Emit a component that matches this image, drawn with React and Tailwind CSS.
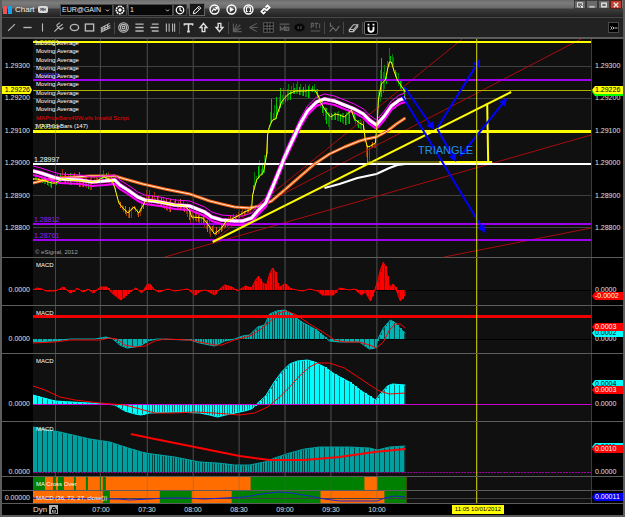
import { ChevronDownIcon } from 'lucide-react';

// Chart space: x runs 33..592 over the plot, y is shared by all the panes
const LEFT = 33;
const WIDTH = 559;
const gridX = [55, 100, 147, 193, 239, 285, 331, 377];
const crosshairX = 477;
const times = ['07:00', '07:30', '08:00', '08:30', '09:00', '09:30', '10:00'];
const prices = ['1.29300', '1.29200', '1.29100', '1.29000', '1.28900', '1.28800'];

const price = [
  [33, 179], [37, 179], [45, 181], [52, 183], [56, 183], [60, 180], [62, 178], [70, 180], [85, 181], [95, 182],
  [104, 177], [112, 180], [115, 188], [119, 203], [124, 209], [128, 213], [134, 207], [139, 213], [145, 202],
  [148, 200], [155, 201], [170, 204], [185, 206], [190, 211], [192, 217], [203, 218], [208, 224], [212, 230],
  [215, 234], [222, 228], [226, 222], [232, 219], [240, 215], [245, 212], [252, 209], [253, 195], [257, 180],
  [260, 176], [264, 172], [267, 155], [268, 135], [270, 126], [273, 120], [276, 119], [278, 113], [282, 102],
  [285, 98], [289, 94], [296, 91], [305, 91], [315, 90], [318, 94], [322, 104], [327, 112], [331, 117],
  [336, 114], [340, 115], [345, 117], [352, 110], [355, 119], [360, 123], [364, 125], [366, 140], [368, 147],
  [371, 146], [376, 143], [378, 120], [379, 100], [382, 84], [386, 80], [388, 70], [390, 62], [392, 62],
  [395, 72], [398, 80], [402, 86], [406, 92],
];

const fastMa = [
  [33, 171], [41, 173], [53, 177], [60, 179], [80, 180], [92, 182], [105, 181], [115, 180], [120, 185],
  [128, 190], [138, 197], [145, 200], [160, 202], [175, 205], [190, 206], [200, 210], [205, 212], [212, 217],
  [222, 220], [235, 221], [243, 221], [252, 218], [258, 211], [266, 203], [273, 187], [280, 170], [286, 155],
  [293, 140], [301, 123], [308, 111], [317, 102], [325, 99], [335, 101], [345, 105], [355, 109], [364, 114],
  [370, 120], [377, 125], [385, 116], [392, 106], [400, 100], [406, 98],
];

const slowMa = [
  [33, 183], [45, 180], [58, 178], [75, 177], [90, 176], [115, 176], [125, 179], [143, 184], [165, 189],
  [190, 194], [210, 201], [222, 204], [235, 207], [250, 208], [260, 206], [272, 201], [285, 190], [300, 177],
  [315, 164], [330, 154], [345, 147], [360, 141], [367, 139], [377, 137], [388, 131], [397, 124], [406, 118],
];

const longMa = [[325, 188], [340, 184], [358, 178], [377, 174], [390, 168], [398, 165], [406, 164]];

// [x, reach above the price line, reach below it]
const barReach = [
  [33, 5, 4], [60, 9, 5], [75, 8, 5], [78, 8, 14], [84, 8, 8], [90, 5, 9], [104, 9, 4], [112, 4, 5], [119, 2, 6],
  [126, 5, 5], [138, 2, 11], [145, 9, 3], [149, 14, 4], [160, 6, 8], [185, 6, 8], [190, 7, 11], [210, 6, 9],
  [215, 7, 5], [226, 5, 6], [250, 5, 3], [254, 18, 1], [257, 22, 1], [262, 14, 2], [268, 22, 1], [272, 28, 1],
  [280, 17, 5], [290, 11, 6], [315, 6, 8], [322, 4, 12], [332, 4, 15], [345, 4, 10], [352, 5, 12], [360, 4, 10],
  [364, 5, 8], [367, 2, 19], [371, 4, 12], [376, 4, 12], [379, 42, 6], [381, 28, 20], [384, 22, 12],
  [388, 18, 4], [391, 20, 2], [396, 9, 10], [406, 6, 7],
];

const macdA = [
  [33, 290], [37, 288], [42, 289], [46, 291], [55, 291], [60, 289], [63, 287], [67, 290], [70, 293], [74, 291],
  [77, 288], [83, 292], [88, 289], [93, 293], [98, 289], [101, 287], [107, 287], [112, 293], [117, 297],
  [121, 300], [125, 296], [130, 292], [136, 288], [142, 293], [147, 285], [150, 284], [155, 290], [159, 292],
  [168, 289], [175, 291], [188, 289], [195, 295], [201, 291], [206, 290], [215, 295], [219, 290], [225, 285],
  [232, 287], [238, 291], [246, 286], [252, 288], [256, 280], [259, 276], [263, 283], [267, 285], [270, 274],
  [273, 268], [276, 273], [279, 288], [285, 284], [292, 289], [303, 291], [310, 289], [318, 291], [323, 295],
  [334, 295], [340, 288], [350, 290], [355, 289], [362, 295], [366, 292], [371, 301], [375, 291], [378, 282],
  [381, 270], [384, 262], [387, 270], [390, 287], [394, 284], [397, 290], [401, 301], [405, 296], [406, 292],
];

const macdB = [
  [33, 342], [55, 341], [70, 339], [95, 339], [106, 337], [113, 339], [120, 345], [127, 348], [135, 347],
  [142, 345], [148, 341], [157, 339], [190, 340], [200, 343], [215, 346], [225, 341], [235, 339], [243, 336],
  [250, 335], [258, 327], [265, 325], [270, 314], [277, 311], [285, 310], [291, 313], [302, 322], [317, 330],
  [330, 341], [340, 342], [360, 342], [370, 349], [376, 348], [379, 338], [384, 328], [391, 320], [396, 323],
  [401, 329], [406, 333],
];
const macdBSignal = [
  [33, 343], [55, 342], [70, 340], [100, 340], [110, 338], [117, 339], [125, 345], [135, 347], [145, 346],
  [155, 341], [165, 339], [190, 340], [205, 343], [215, 345], [222, 345], [235, 340], [250, 336], [260, 330],
  [270, 322], [278, 313], [287, 311], [297, 315], [310, 324], [325, 333], [335, 340], [345, 342], [360, 342],
  [370, 345], [377, 348], [384, 342], [390, 330], [396, 324], [401, 324], [406, 328],
];

const macdC = [
  [33, 395], [40, 397], [55, 401], [90, 403], [105, 404], [115, 405], [125, 411], [135, 414], [141, 415],
  [150, 413], [175, 412], [200, 413], [210, 415], [218, 417], [226, 415], [245, 411], [252, 409], [257, 404],
  [266, 396], [274, 383], [282, 372], [290, 364], [298, 361], [308, 360], [315, 362], [325, 367], [335, 374],
  [350, 382], [362, 391], [370, 396], [376, 400], [380, 395], [388, 386], [393, 384], [406, 385],
];
const macdCSignal = [
  [33, 386], [45, 390], [60, 397], [75, 400], [100, 403], [125, 405], [140, 409], [155, 413], [175, 413],
  [195, 412], [215, 413], [240, 415], [255, 413], [268, 407], [280, 397], [290, 387], [300, 376], [310, 367],
  [318, 363], [330, 363], [345, 368], [360, 378], [372, 386], [380, 391], [390, 394], [406, 393],
];

const macdD = [
  [33, 427], [60, 432], [90, 439], [110, 442], [125, 447], [145, 453], [175, 457], [200, 462], [218, 463],
  [235, 465], [250, 465], [265, 462], [275, 458], [290, 453], [305, 449], [320, 447], [350, 447], [370, 448],
  [378, 450], [390, 447], [406, 446],
];
const macdDSignal = [
  [131, 434], [150, 438], [180, 444], [210, 450], [240, 456], [270, 460], [305, 460], [340, 457], [375, 452],
  [406, 449],
];

// Green stretches on the orange signal strips
const crossGreen = [[33, 45], [53, 56], [58, 64], [74, 76], [86, 88], [100, 101], [103, 106], [251, 365], [378, 407]];
const trendGreen = [[103, 110], [160, 192], [232, 321], [385, 407]];
const trendLine = [
  [33, 498], [100, 499], [118, 499], [130, 500], [150, 499], [165, 498], [185, 498], [205, 499], [225, 498],
  [245, 497], [262, 494], [278, 492], [292, 493], [310, 496], [325, 499], [340, 501], [370, 501], [378, 501],
  [385, 498], [395, 496], [406, 497],
];

const levels = [
  { y: 42, label: '1.29351', line: '#ffff00', text: 'text-[#d8d800]', width: 2 },
  { y: 80, label: '1.29255', line: '#a000f0', text: 'text-[#5030e0]', width: 2 },
  { y: 131, label: '1.29101', line: '#ffff00', text: 'text-[#d8d800]', width: 3 },
  { y: 164, label: '1.28997', line: '#ffffff', text: 'text-white', width: 2 },
  { y: 224, label: '1.28812', line: '#a000f0', text: 'text-[#8a20f0]', width: 2 },
  { y: 240, label: '1.28761', line: '#a000f0', text: 'text-[#8a20f0]', width: 2 },
];

const toPoints = (data, dy = 0) => data.map(([x, y]) => `${x},${y + dy}`).join(' ');

const valueAt = (data, x, column = 1) => {
  const i = data.findIndex((p) => p[0] >= x);
  if (i <= 0) return data[0][column];
  const a = data[i - 1];
  const b = data[i];
  return a[column] + ((b[column] - a[column]) * (x - a[0])) / (b[0] - a[0]);
};

const barXs = Array.from({ length: 244 }, (_, i) => 33 + i * 1.53);
const histXs = Array.from({ length: 149 }, (_, i) => 33 + i * 2.5);

const isUpBar = (x, i) => {
  if (x < 60) return i % 5 < 3;
  if (x < 110) return i % 6 === 0 || (x > 98 && x < 107);
  if (x < 252) return false;
  return x < 363 || x > 377;
};

const Line = ({ data, color, width = 1, dy = 0 }) => (
  <polyline points={toPoints(data, dy)} fill="none" stroke={color} strokeWidth={width} strokeLinejoin="round" />
);

const PriceBars = () => (
  <g shapeRendering="crispEdges">
    {barXs.map((x, i) => {
      const y = valueAt(price, x);
      const noise = ((i * 37) % 11) / 11;
      const high = y - valueAt(barReach, x, 1) * (0.2 + noise * 0.9);
      const low = y + valueAt(barReach, x, 2) * (0.2 + (((i * 53) % 13) / 13) * 0.9);
      const color = isUpBar(x, i) ? (i % 3 ? '#007c00' : '#00c800') : i % 3 ? '#8c3800' : '#d85c10';
      return <rect key={i} x={x} y={high} width="1" height={low - high} fill={color} />;
    })}
  </g>
);

const Histogram = ({ data, base, color, shade }) => (
  <g>
    <polygon points={`33,${base} ${toPoints(data)} 406,${base}`} fill={shade} />
    <g shapeRendering="crispEdges">
      {histXs.map((x) => {
        const y = valueAt(data, x);
        return (
          <rect key={x} x={x} y={Math.min(y, base)} width="1.7" height={Math.abs(y - base)} fill={color} />
        );
      })}
    </g>
    <Line data={data} color={color} />
  </g>
);

const Arrow = ({ x1, y1, x2, y2 }) => {
  const angle = Math.atan2(y2 - y1, x2 - x1);
  const len = Math.hypot(x2 - x1, y2 - y1);
  const deg = (angle * 180) / Math.PI;
  return (
    <g transform={`translate(${x1} ${y1}) rotate(${deg})`}>
      <path d={`M0 0H${len - 4}`} stroke="#0000ff" strokeWidth="2" />
      <path d={`M${len} 0l-8 -4v8z`} fill="#0000ff" />
    </g>
  );
};

const Plot = ({ top, height, children }) => (
  <svg
    className="absolute inset-0 h-full w-full"
    viewBox={`${LEFT} ${top} ${WIDTH} ${height}`}
    preserveAspectRatio="none"
    aria-hidden="true"
  >
    {gridX.map((x) => (
      <rect key={x} x={x} y={top} width="1" height={height} fill="#404040" />
    ))}
    {children}
    {gridX.map((x) => (
      <rect key={x} x={x} y={top} width="1" height={height} fill="#606060" opacity="0.3" />
    ))}
    <rect x={crosshairX} y={top} width="1" height={height} fill="#dcdc00" />
  </svg>
);

const Tag = ({ children, className }) => (
  <span className={`absolute right-0 left-0 h-2 pl-[3px] leading-2 [clip-path:polygon(0_50%,3px_0,100%_0,100%_100%,3px_100%)] ${className}`}>
    {children}
  </span>
);

const Pane = ({ top, height, className, left, right, label, overlay, children }) => (
  <section className={`flex border-b border-[#5c5c5c] text-[7px] ${className}`}>
    <div className="relative w-[31px] shrink-0 pr-[3px] text-right">{left}</div>
    <div className="relative min-w-0 flex-1 overflow-hidden border-r border-[#3c3c3c] bg-[#101010]">
      <Plot top={top} height={height}>{children}</Plot>
      {label && <h2 className="relative pt-[3px] pl-[3px] text-[6px] leading-2 text-white">{label}</h2>}
      {overlay}
    </div>
    <div className="relative w-[31px] shrink-0 pl-[3px]">{right}</div>
  </section>
);

const Icon = ({ children, className = 'size-[11px]' }) => (
  <svg className={className} viewBox="0 0 16 16" fill="none" stroke="currentColor" strokeWidth="1.6" aria-hidden="true">
    {children}
  </svg>
);

const drawTools = [
  { name: 'Trend line', icon: <path d="M3 13L13 3" /> },
  { name: 'Horizontal line', icon: <path d="M2 8h12" strokeWidth="2" /> },
  { name: 'Vertical line', icon: <path d="M8 2v12" /> },
  { name: 'Pitchfork', icon: <path d="M2 14L8 8M5 5l6 6M5 5l5-4M8 8l6-5M11 11l4-3" /> },
  { name: 'Ellipse', icon: <ellipse cx="8" cy="8" rx="6" ry="4.5" strokeWidth="2" /> },
  { name: 'Rectangle', icon: <rect x="2" y="3" width="12" height="10" strokeWidth="2" /> },
  { name: 'Channel', icon: <path d="M1 9L14 2M1 12l14-7M1 15l14-7M3 8v6M7 6v6M11 4v6" /> },
];
const fibTools = [
  { name: 'Fibonacci circle', icon: <><circle cx="8" cy="8" r="7" /><circle cx="8" cy="8" r="4.5" /><circle cx="8" cy="8" r="2" /></> },
  { name: 'Fibonacci extension', icon: <path d="M2 3h12M2 8h12M2 13h12" strokeWidth="2" /> },
  { name: 'Fibonacci retracement', icon: <path d="M4 3h10M2 8h12M4 13h10" strokeWidth="2" /> },
  { name: 'Fibonacci time', icon: <path d="M2 2v12M6 2v12M11 2v12M14 2v12" /> },
];
const markTools = [
  { name: 'Text', icon: <path d="M2 5V3h12v2M8 3v11M6 14h4" strokeWidth="2.2" /> },
  { name: 'Up arrow', icon: <path d="M8 2l5 6h-3v6H6V8H3z" strokeWidth="2" /> },
  { name: 'Down arrow', icon: <path d="M8 14l5-6h-3V2H6v6H3z" strokeWidth="2" /> },
];
const gannTools = [
  { name: 'Gann fan', icon: <path d="M2 2v12h12M2 14L12 4M2 14l5-11M2 14l11-5" /> },
  { name: 'Speed lines', icon: <path d="M2 8l11-6M2 8h12M2 8l11 6" /> },
  { name: 'Gann box', icon: <><path d="M1 1h14v14H1z" fill="#000" /><path d="M6 1v14M10 1v14M1 6h14M1 10h14" /></> },
  { name: 'Mode', icon: <path d="M1 3h14M2 13V7l3 4 3-4v6M10 8h4v4h-4z" strokeWidth="2" /> },
  { name: 'Cycles', icon: <><ellipse cx="8" cy="8" rx="7" ry="5" fill="#050505" stroke="#0c0c0c" /><path d="M6 6v4M10 6v4" /></> },
  { name: 'PTI', icon: <path d="M2 9V2h3v4H2M7 2h5M9 2v7M14 2v7M1 13h14" /> },
];

const ToolButton = ({ name, children, className = '' }) => (
  <button type="button" aria-label={name} className={`flex items-center justify-center ${className}`}>
    {children}
  </button>
);

const ToolGroup = ({ tools, className }) => (
  <div className={`grid shrink-0 ${className}`}>
    {tools.map((tool) => (
      <ToolButton key={tool.name} name={tool.name}>
        <Icon>{tool.icon}</Icon>
      </ToolButton>
    ))}
  </div>
);

const Separator = () => <span className="mx-px h-3 w-px shrink-0 bg-[#484848]" />;

const Dropdown = ({ name, value, className }) => (
  <div className={`relative h-3 border border-[#4a4a4a] bg-[#080808] ${className}`}>
    <select aria-label={name} defaultValue={value} className="block h-full w-full appearance-none pl-px text-[7px] leading-none text-[#e8e8e8]">
      <option>{value}</option>
    </select>
    <ChevronDownIcon className="pointer-events-none absolute top-[3px] right-[2px] size-[5px] text-white" strokeWidth={4} />
  </div>
);

const TitleBar = () => (
  <header className="flex h-[17px] bg-[linear-gradient(#6c6c6c_0,#7c7c7c_3px,#686868_8px,#3c3c3c_9px,#222_17px)]">
    <div className="flex items-center pt-[2px] pl-px">
      <span className="flex gap-px">
        <span className="h-2 w-1 bg-[#f05050]" />
        <span className="h-2 w-1 bg-[#18a0e8]" />
      </span>
      <h1 className="w-6 pl-[3px] text-[8px] leading-3 text-[#f0f0f0]">Chart</h1>
      <span className="ml-[2px] flex h-[7px] w-[10px] items-center justify-center rounded-[2px] bg-[#dcdcdc] text-[#333]">
        <Icon className="h-[5px] w-2"><path d="M1 13V3l3 6 3-6v10M10 3v10M10 8h5M15 3v10" strokeWidth="2" /></Icon>
      </span>
      <Dropdown name="Symbol" value="EUR@GAIN" className="ml-3 w-[53px]" />
      <ToolButton name="Symbol settings" className="h-3 w-[14px] border border-[#444] bg-[#181818] text-white">
        <Icon className="size-[10px]"><circle cx="8" cy="8" r="6" strokeWidth="2.5" strokeDasharray="3 1" /><circle cx="8" cy="8" r="2" fill="currentColor" /></Icon>
      </ToolButton>
      <Dropdown name="Interval" value="1" className="ml-px w-[45px]" />
      <ToolButton name="Time template" className="h-3 w-[14px] border border-[#444] bg-[#181818] text-white">
        <Icon className="size-[10px]"><circle cx="8" cy="8" r="6" strokeWidth="2" /><path d="M8 4v4l3 2" strokeWidth="2" /></Icon>
      </ToolButton>
      <ToolButton name="Draw" className="ml-[2px] h-[13px] w-4 border border-[#666] bg-[#181818] text-white">
        <Icon className="size-[10px]"><path d="M2 14l1-4 8-8 3 3-8 8zM9 4l3 3" /></Icon>
      </ToolButton>
      <div className="ml-px grid w-[68px] grid-cols-4 text-white">
        <ToolButton name="Refresh"><Icon><circle cx="8" cy="8" r="6.5" strokeWidth="2" /><path d="M4 11l3-4 2 2 3-4M9 5h3v3" /></Icon></ToolButton>
        <ToolButton name="Play"><Icon><circle cx="8" cy="8" r="6.5" strokeWidth="2" /><path d="M6 5v6l5-3z" fill="currentColor" strokeWidth="1" /></Icon></ToolButton>
        <ToolButton name="Alert"><Icon><circle cx="8" cy="8" r="6.5" strokeWidth="2" /><path d="M5 11V7a3 3 0 016 0v4M4 11h3M9 11h3" /></Icon></ToolButton>
        <ToolButton name="Link"><Icon><path d="M8 5l3-3 3 3-4 4-3-1M8 11l-3 3-3-3 4-4 3 1" strokeWidth="2.4" /></Icon></ToolButton>
      </div>
    </div>
    <div className="ml-auto flex h-[9px] pr-px text-[#f0f0f0]">
      <ToolButton name="Pop out" className="w-3 border border-[#3a3a3a] bg-[#6a6a6a]">
        <Icon className="size-[6px]"><path d="M8 13H1V2h14v7M9 9l6 6M15 10v5h-5" strokeWidth="2.5" /></Icon>
      </ToolButton>
      <ToolButton name="Minimize" className="w-3 border border-[#3a3a3a] bg-[#6a6a6a]">
        <Icon className="size-[6px]"><path d="M1 13h14" strokeWidth="3" /></Icon>
      </ToolButton>
      <ToolButton name="Maximize" className="w-3 border border-[#3a3a3a] bg-[#6a6a6a]">
        <Icon className="size-[6px]"><path d="M2 3h12v10H2z" strokeWidth="3" /></Icon>
      </ToolButton>
      <ToolButton name="Close" className="w-3 border border-[#5a2018] bg-[#c04030]">
        <Icon className="size-[6px]"><path d="M2 2l12 12M14 2L2 14" strokeWidth="3.5" /></Icon>
      </ToolButton>
    </div>
  </header>
);

const Toolbar = () => (
  <div className="flex h-5 items-center border-t border-[#484848] bg-[#222] pl-[2px] text-[#b8b8b8]">
    <ToolGroup tools={drawTools} className="w-[109px] grid-cols-7" />
    <Separator />
    <ToolGroup tools={fibTools} className="w-[62px] grid-cols-4" />
    <Separator />
    <ToolGroup tools={markTools} className="w-[46px] grid-cols-3 text-[#e0e0e0]" />
    <Separator />
    <ToolGroup tools={gannTools} className="w-[93px] grid-cols-6 text-[#5c5c5c]" />
    <Separator />
    <ToolButton name="Regression" className="w-4 text-[#6c6c6c]"><Icon><path d="M2 1v5h3M1 14l5-6 4 5 5-7" /></Icon></ToolButton>
    <Separator />
    <ToolButton name="Eraser" className="w-4"><Icon><path d="M2 11l6-7h6l-6 7zM2 11v3h6v-3M8 14l6-7V4" /></Icon></ToolButton>
    <Separator />
    <ToolButton name="Magnet" className="size-[14px] rounded-[2px] border border-[#777] bg-black text-white">
      <Icon className="size-[10px]"><path d="M4 6v4a4 4 0 008 0V6M4 1v3M12 1v3" strokeWidth="3" /></Icon>
    </ToolButton>
    <ToolButton name="Toolbar settings" className="mr-1 ml-auto size-[11px] border border-[#4a4a4a] bg-black text-[#c0c0c0]">
      <Icon className="size-2"><path d="M1 5l3 3-3 3M5 5l3 3-3 3M9 8h6" strokeWidth="2" /></Icon>
    </ToolButton>
  </div>
);

const PriceAxis = () => (
  <div className="flex h-full flex-col justify-between pt-[23px] pb-[25px] leading-2">
    {prices.map((p) => <span key={p}>{p}</span>)}
  </div>
);

const Studies = () => (
  <ul className="relative flex h-[91px] flex-col justify-between pl-[3px] text-[6px] leading-2 text-white">
    {Array.from({ length: 9 }, (_, i) => <li key={i}>Moving Average</li>)}
    <li className="text-[#f00000]">MAPriceBars49W.efs Invalid Script</li>
    <li>MA PriceBars (147)</li>
  </ul>
);

const PricePane = () => (
  <Pane
    top={39}
    height={218}
    className="min-h-[219px] flex-1"
    left={
      <>
        <PriceAxis />
        <span className="absolute top-[47px] right-px left-0 h-2 bg-[#ffff00] pr-[2px] leading-2 text-black [clip-path:polygon(0_0,28px_0,100%_50%,28px_100%,0_100%)]">1.29226</span>
      </>
    }
    right={
      <>
        <PriceAxis />
        <Tag className="top-[49px] bg-[#00ff00]" />
        <Tag className="top-[47px] bg-[#ffff00] text-black">1.29226</Tag>
      </>
    }
    overlay={
      <>
        {levels.map((level) => (
          <span
            key={level.label}
            className={`absolute left-px leading-2 ${level.text}`}
            style={{ top: `${Math.max(0, ((level.y - 47) / 218) * 100)}%` }}
          >
            {level.label}
          </span>
        ))}
        <Studies />
        <span className="absolute top-[48%] left-[69%] text-[11px] leading-3 text-[#1e90f0]">TRIANGLE</span>
        <small className="absolute bottom-px left-[2px] text-[6px] leading-2 text-[#a0a0a0]">© eSignal, 2012</small>
      </>
    }
  >
    {[66, 98, 131, 163, 195, 227].map((y) => (
      <rect key={y} x="33" y={y} width="559" height="1" fill="#404040" />
    ))}
    <PriceBars />
    <g stroke="#a80c0c" strokeWidth="1">
      <path d="M214 241L463 39" />
      <path d="M270 201L582 39" />
      <path d="M165 257L592 135" />
      <path d="M445 257L592 228" />
    </g>
    {levels.map((level) => (
      <rect key={level.label} x="33" y={level.y - 1} width="559" height={level.width} fill={level.line} />
    ))}
    <rect x="33" y="90" width="559" height="1" fill="#b0b000" />
    <Line data={slowMa} color="#f06010" width={3} />
    <Line data={slowMa} color="#ffe8d0" width={1} />
    <Line data={longMa} color="#ffffff" width={2} />
    <Line data={fastMa} color="#ff00ff" dy={-5} />
    <Line data={fastMa} color="#ff00ff" width={2} dy={4} />
    <Line data={fastMa} color="#ff00ff" width={4} />
    <Line data={fastMa} color="#ffffff" width={3} />
    <Line data={price} color="#ffff00" />
    <g stroke="#ffff00" strokeWidth="2">
      <path d="M213 242L512 92" />
      <path d="M488 103L489 162" />
      <path d="M440 162H493" />
      <path d="M368 162H440" stroke="#b0b000" strokeWidth="1" />
    </g>
    <Arrow x1={405} y1={87} x2={435} y2={130} />
    <Arrow x1={403} y1={96} x2={486} y2={233} />
    <Arrow x1={438} y1={129} x2={457} y2={162} />
    <Arrow x1={438} y1={128} x2={481} y2={59} />
    <Arrow x1={461} y1={156} x2={508} y2={98} />
  </Pane>
);

const Strip = ({ y, height, green }) => (
  <g>
    <rect x="33" y={y} width="374" height={height} fill="#ff6c00" />
    {green.map(([from, to]) => (
      <rect key={from} x={from} y={y} width={to - from} height={height} fill="#008000" />
    ))}
  </g>
);

const ZeroLabel = ({ className }) => <span className={`absolute leading-2 ${className}`}>0.0000</span>;

export default function App() {
  return (
    <main className="flex min-h-screen flex-col border-x-2 border-[#5c5c5c] bg-black font-['Liberation_Sans',Arial,sans-serif] text-[7px] text-[#e0e0e0]">
      <TitleBar />
      <Toolbar />
      <div className="h-[2px] bg-[#5c5c5c]" />
      <PricePane />

      <Pane
        top={258}
        height={47}
        className="h-12"
        label="MACD"
        left={<ZeroLabel className="top-7 right-[3px]" />}
        right={
          <>
            <ZeroLabel className="top-7 left-[3px]" />
            <Tag className="top-[34px] bg-[#ff0000] text-white">-0.0002</Tag>
          </>
        }
      >
        <rect x="33" y="290" width="559" height="1" fill="#000000" />
        <Histogram data={macdA} base={290} color="#ff0000" shade="#a80000" />
      </Pane>

      <Pane
        top={306}
        height={47}
        className="h-12"
        label="MACD"
        left={<ZeroLabel className="top-[29px] right-[3px]" />}
        right={
          <>
            <ZeroLabel className="top-[29px] left-[3px]" />
            <Tag className="top-[23px] bg-[#00ffff] text-black">0.0002</Tag>
            <Tag className="top-[17px] bg-[#ff0000] text-white">0.0003</Tag>
          </>
        }
      >
        <rect x="33" y="339" width="559" height="1" fill="#000000" />
        <Histogram data={macdB} base={339} color="#00b4b4" shade="#004c4c" />
        <rect x="33" y="315" width="559" height="3" fill="#f00000" />
        <Line data={macdBSignal} color="#ff0000" />
      </Pane>

      <Pane
        top={354}
        height={67}
        className="h-[68px]"
        label="MACD"
        left={<ZeroLabel className="top-[46px] right-[3px]" />}
        right={
          <>
            <ZeroLabel className="top-[46px] left-[3px]" />
            <Tag className="top-[26px] bg-[#00ffff] text-black">0.0004</Tag>
            <Tag className="top-8 bg-[#ff0000] text-white">0.0003</Tag>
          </>
        }
      >
        <Histogram data={macdC} base={404} color="#00ffff" shade="#007474" />
        <rect x="33" y="404" width="559" height="1" fill="#d000d0" />
        <Line data={macdCSignal} color="#ff0000" />
      </Pane>

      <Pane
        top={422}
        height={54}
        className="h-[55px]"
        label="MACD"
        left={<ZeroLabel className="top-[46px] right-[3px]" />}
        right={
          <>
            <ZeroLabel className="top-[46px] left-[3px]" />
            <Tag className="top-[21px] bg-[#00ffff] text-black">0.0011</Tag>
            <Tag className="top-[23px] bg-[#ff0000] text-white">0.0010</Tag>
          </>
        }
      >
        <Histogram data={macdD} base={472} color="#00a0a0" shade="#004444" />
        <path d="M33 472.5H592" stroke="#a000a0" strokeDasharray="2 1" />
        <Line data={macdDSignal} color="#ff0000" width={2} />
      </Pane>

      <Pane top={477} height={13} className="h-[14px]" label="MA Cross Over">
        <Strip y={477} height={13} green={crossGreen} />
      </Pane>

      <Pane
        top={491}
        height={12}
        className="h-[13px]"
        label="MACD (36, 72, 27, close())"
        left={<span className="absolute top-[3px] right-[3px] leading-2">0.00000</span>}
        right={<Tag className="top-[2px] bg-[#0000f0] text-white">0.00011</Tag>}
      >
        <Strip y={491} height={12} green={trendGreen} />
        <rect x="33" y="498" width="559" height="1" fill="#404040" />
        <Line data={trendLine} color="#2020d0" />
      </Pane>

      <footer className="flex h-[11px] leading-[11px]">
        <div className="w-[31px] shrink-0" />
        <div className="grid min-w-0 flex-1 grid-cols-[45fr_repeat(7,46fr)_52fr_52fr_88fr] text-center">
          <span className="flex items-center gap-[2px] text-[8px]">
            Dyn
            <ToolButton name="Lock scale" className="size-[9px] bg-[#b0b0b0] text-black">
              <Icon className="size-2"><path d="M3 14V7h10v7zM5 7V3h5v4M6 10h5" strokeWidth="2" /></Icon>
            </ToolButton>
          </span>
          {times.map((t) => <span key={t}>{t}</span>)}
          <span />
          <time className="my-px bg-[#ffff00] text-[6px] leading-[9px] whitespace-nowrap text-black">11:05 10/01/2012</time>
          <span />
        </div>
        <div className="w-[31px] shrink-0" />
      </footer>
      <div className="h-[2px] bg-[#5c5c5c]" />
    </main>
  );
}
